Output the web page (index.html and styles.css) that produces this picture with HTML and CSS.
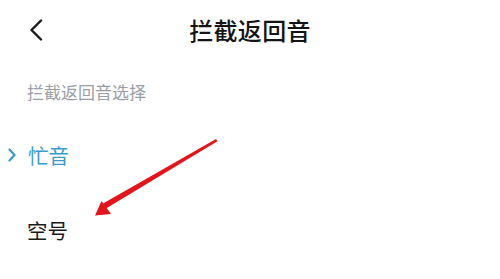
FILE: index.html
```html
<!DOCTYPE html>
<html lang="zh">
<head>
<meta charset="utf-8">
<title>拦截返回音</title>
<link rel="stylesheet" href="styles.css">
</head>
<body>
<div class="page">
  <header class="header">
    <div class="back">
      <svg width="14" height="22" viewBox="0 0 14 22"><path d="M12 1.5 L2.5 11 L12 20.5" fill="none" stroke="#1a1a1a" stroke-width="2.4" stroke-linecap="round" stroke-linejoin="round"/></svg>
    </div>
    <h1 class="title">拦截返回音</h1>
    <div class="spacer"></div>
  </header>
  <div class="section-label">拦截返回音选择</div>
  <ul class="options">
    <li class="option selected">
      <svg class="chev" width="8" height="14" viewBox="0 0 8 14"><path d="M1.5 1.5 L6.5 7 L1.5 12.5" fill="none" stroke="#3a9bc8" stroke-width="2.2" stroke-linecap="round" stroke-linejoin="round"/></svg>
      <span>忙音</span>
    </li>
    <li class="option plain"><span>空号</span></li>
  </ul>
  <svg class="annot" width="500" height="279" viewBox="0 0 500 279">
    <polygon points="216,139 217.5,141.2 106,208.5 103,203.5" fill="#e0161c"/>
    <polygon points="95,215.5 101.5,201 111,214" fill="#e0161c"/>
  </svg>
</div>
</body>
</html>
```
FILE: styles.css
```css
html, body {
  margin: 0;
  padding: 0;
  background: #ffffff;
}
body {
  font-family: "Noto Sans CJK SC", "Noto Sans", sans-serif;
  width: 500px;
  height: 279px;
  overflow: hidden;
}
.page {
  position: relative;
  width: 500px;
  height: 279px;
}
.header {
  height: 60px;
  display: grid;
  grid-template-columns: 1fr auto 1fr;
  align-items: center;
}
.back {
  padding-left: 29px;
  display: flex;
  align-items: center;
}
.spacer {
  padding-left: 5px;
}
.title {
  margin: 0;
  font-size: 24px;
  line-height: 24px;
  font-weight: 500;
  color: #141414;
  letter-spacing: 0.3px;
}
.section-label {
  margin-top: 20px;
  padding-left: 27px;
  font-size: 17px;
  line-height: 24px;
  color: #9a9ea6;
}
.options {
  list-style: none;
  margin: 0;
  padding: 26px 0 0 0;
  display: flex;
  flex-direction: column;
  gap: 25px;
}
.option {
  height: 50px;
  display: flex;
  align-items: center;
  font-size: 20.5px;
  line-height: 24px;
}
.option.selected {
  padding-left: 8px;
  color: #3a9bc8;
}
.option.selected .chev {
  margin-right: 12px;
}
.option.plain {
  padding-left: 27px;
  color: #1a1a1a;
}
.annot {
  position: absolute;
  left: 0;
  top: 0;
  pointer-events: none;
}
```
